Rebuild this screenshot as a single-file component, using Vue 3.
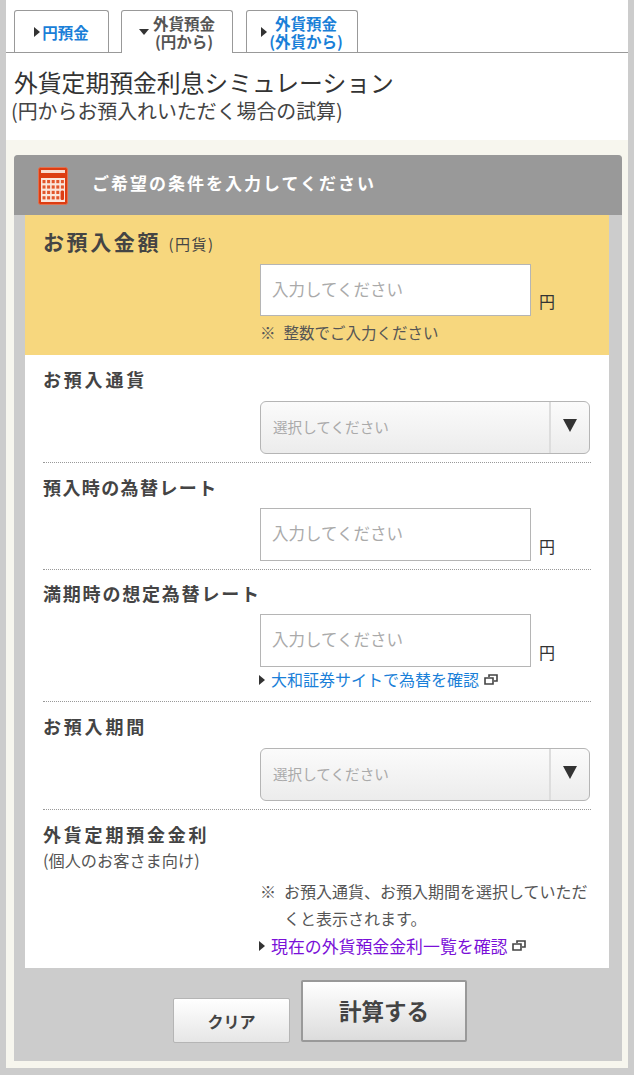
<script setup>
const tabs = [
  { lines: ['円預金'], active: false },
  { lines: ['外貨預金', '(円から)'], active: true },
  { lines: ['外貨預金', '(外貨から)'], active: false },
]
</script>

<template>
  <div class="page">
    <nav class="tabs">
      <a v-for="(tab, i) in tabs" :key="i" class="tab" :class="{ active: tab.active, first: i === 0 }" href="#">
        <span class="tabArrow"></span>
        <span class="tabText">
          <span v-for="line in tab.lines" :key="line">{{ line }}</span>
        </span>
      </a>
    </nav>

    <header class="pageTitle">
      <h1>外貨定期預金利息シミュレーション</h1>
      <p>(円からお預入れいただく場合の試算)</p>
    </header>

    <main class="cream">
      <section class="panel">
        <div class="panelHead">
          <svg class="calc" width="30" height="38" viewBox="0 0 30 38">
            <rect x="0.5" y="0.5" width="29" height="37" rx="2" fill="#dd3d12" stroke="#e2714f" />
            <rect x="3" y="3" width="24" height="3" fill="#f9dccf" />
            <rect x="3" y="11" width="24" height="24" fill="#fbe6dc" />
            <g fill="#e2562c">
              <template v-for="r in 4" :key="'r' + r">
                <rect v-for="c in 5" :key="c" :x="4.5 + (c - 1) * 4.6" :y="13 + (r - 1) * 5.4" width="3" height="3.2" />
              </template>
            </g>
            <rect x="22.6" y="23.5" width="3.4" height="9.5" rx="1.6" fill="#dd3d12" />
          </svg>
          <h2>ご希望の条件を入力してください</h2>
        </div>

        <div class="panelBody">
          <div class="amount">
            <div class="label big">お預入金額 <small>(円貨)</small></div>
            <div class="field">
              <div class="fakeInput">入力してください</div>
              <span class="unit">円</span>
            </div>
            <p class="note first">
              <span>※</span>
              <span>整数でご入力ください</span>
            </p>
          </div>

          <div class="row rowSelect">
            <div class="label wide">お預入通貨</div>
            <div class="field">
              <div class="fakeSelect">
                <span>選択してください</span>
                <i class="selectBtn"><b></b></i>
              </div>
            </div>
          </div>

          <div class="row rowInput">
            <div class="label">預入時の為替レート</div>
            <div class="field">
              <div class="fakeInput">入力してください</div>
              <span class="unit">円</span>
            </div>
          </div>

          <div class="row rowLink">
            <div class="label mid">満期時の想定為替レート</div>
            <div class="field">
              <div class="fakeInput">入力してください</div>
              <span class="unit">円</span>
            </div>
            <a class="extLink" href="#">
              <span class="linkArrow"></span>大和証券サイトで為替を確認
              <svg class="ext" width="14" height="11" viewBox="0 0 14 11">
                <path d="M5 3V1h8v6h-3M1 4h8v6H1z" fill="none" stroke="#444" stroke-width="1.6" />
              </svg>
            </a>
          </div>

          <div class="row rowSelect">
            <div class="label wide">お預入期間</div>
            <div class="field">
              <div class="fakeSelect">
                <span>選択してください</span>
                <i class="selectBtn"><b></b></i>
              </div>
            </div>
          </div>

          <div class="row last">
            <div class="label wide">外貨定期預金金利</div>
            <div class="subLabel">(個人のお客さま向け)</div>
            <p class="note rate">
              <span>※</span>
              <span>お預入通貨、お預入期間を選択していただくと表示されます。</span>
            </p>
            <a class="extLink visited" href="#">
              <span class="linkArrow"></span>現在の外貨預金金利一覧を確認
              <svg class="ext" width="14" height="11" viewBox="0 0 14 11">
                <path d="M5 3V1h8v6h-3M1 4h8v6H1z" fill="none" stroke="#444" stroke-width="1.6" />
              </svg>
            </a>
          </div>
        </div>

        <div class="buttons">
          <button class="btnClear">クリア</button>
          <button class="btnCalc">計算する</button>
        </div>
      </section>
    </main>
  </div>
</template>

<style scoped>
.page {
  width: 622px;
  margin: 0 6px;
  padding-top: 6px;
  background: #fff;
  font-family: "Noto Sans CJK JP", "Liberation Sans", sans-serif;
  color: #333;
}

/* tabs */
.tabs {
  display: flex;
  align-items: flex-end;
  height: 47px;
  padding-left: 8px;
  gap: 12px;
  border-bottom: 1px solid #999;
  box-sizing: border-box;
}
.tab {
  display: flex;
  align-items: center;
  justify-content: center;
  width: 112px;
  height: 42px;
  box-sizing: border-box;
  border: 1px solid #999;
  border-bottom: 0;
  border-radius: 3px 3px 0 0;
  background: #fff;
  color: #1a7fd8;
  text-decoration: none;
  font-size: 15.5px;
  font-weight: 700;
  line-height: 18px;
}
.tab.first { width: 95px; }
.tab:last-child { margin-left: 1px; }
.tab.active {
  height: 43px;
  margin-bottom: -1px;
  color: #555;
}
.tabText {
  display: flex;
  flex-direction: column;
  align-items: center;
}
.tabArrow {
  width: 0;
  height: 0;
  margin-right: 2px;
  border-style: solid;
  border-width: 5px 0 5px 6px;
  border-color: transparent transparent transparent #333;
}
.active .tabArrow {
  margin-right: 4px;
  border-width: 6px 5px 0 5px;
  border-color: #333 transparent transparent transparent;
}

/* title */
.pageTitle { height: 87px; padding-left: 8px; box-sizing: border-box; }
.pageTitle h1 {
  margin: 0;
  padding-top: 14px;
  font-size: 23.8px;
  line-height: 30px;
  font-weight: 400;
  color: #333;
}
.pageTitle p {
  margin: 0 0 0 -3px;
  font-size: 19.9px;
  line-height: 28px;
  color: #444;
}

.cream {
  padding: 15px 6px 7px 8px;
  background: #f7f6ee;
}
.panel {
  background: #ccc;
  border-radius: 4px 4px 0 0;
}
.panelHead {
  display: flex;
  align-items: center;
  height: 60px;
  padding-left: 24px;
  background: #999;
  border-radius: 4px 4px 0 0;
}
.calc { margin-top: 1px; }
.panelHead h2 {
  margin: 0 0 5px 24px;
  font-size: 17px;
  font-weight: 700;
  letter-spacing: 2px;
  color: #fff;
}
.panelBody {
  margin: 0 13px 0 11px;
  background: #fff;
}

/* rows */
.amount {
  height: 140px;
  box-sizing: border-box;
  padding: 13px 18px 0;
  background: #f7d77e;
}
.label {
  font-size: 18px;
  line-height: 26px;
  font-weight: 700;
  letter-spacing: 1.4px;
  color: #444;
}
.label.wide { letter-spacing: 2.8px; }
.label.mid { letter-spacing: 1.8px; }
.label.big {
  font-size: 21px;
  letter-spacing: 2.6px;
}
.label small {
  font-size: 15px;
  font-weight: 400;
  letter-spacing: 1.5px;
}
.row {
  margin: 0 18px;
  padding-top: 11px;
  border-bottom: 1px dotted #999;
}
.row .label { margin-bottom: 8px; }
.amount .label { margin-bottom: 7px; }
.rowSelect { padding-bottom: 8px; }
.rowSelect .label { margin-bottom: 9px; }
.rowInput { padding-bottom: 8px; }
.rowLink { padding-top: 10px; padding-bottom: 8px; }
.row.last { border-bottom: 0; padding-bottom: 9px; }
.row.last .label { margin-bottom: 0; }
.field {
  display: flex;
  align-items: flex-end;
  margin-left: 217px;
}
.fakeInput {
  width: 271px;
  height: 53px;
  box-sizing: border-box;
  padding-left: 11px;
  display: flex;
  align-items: center;
  padding-bottom: 3px;
  border: 1.5px solid #b5b5b5;
  background: #fff;
  font-size: 16.5px;
  color: #aaa;
}
.amount .fakeInput { height: 52px; }
.unit {
  margin: 0 0 4px 8px;
  font-size: 16px;
  line-height: 22px;
  color: #333;
}
.fakeSelect {
  display: flex;
  align-items: center;
  justify-content: space-between;
  width: 330px;
  height: 53px;
  box-sizing: border-box;
  padding-left: 12px;
  border: 1.5px solid #b5b5b5;
  border-radius: 6px;
  background: linear-gradient(#fbfbfb, #ececec);
  font-size: 14.6px;
  color: #aaa;
}
.fakeSelect span { padding-bottom: 2px; }
.selectBtn {
  display: flex;
  align-items: center;
  justify-content: center;
  width: 38px;
  height: 100%;
  border-left: 2px solid #ddd;
}
.selectBtn b {
  width: 0;
  height: 0;
  border-style: solid;
  border-width: 13px 7.5px 0 7.5px;
  border-color: #333 transparent transparent transparent;
  margin-bottom: 4px;
}
.note {
  margin: 0;
  font-size: 16px;
  line-height: 27px;
  color: #555;
}
.note.first {
  display: flex;
  gap: 8px;
  margin: 4px 0 0 217px;
  font-size: 15.5px;
  line-height: 24px;
}
.note.rate {
  display: flex;
  gap: 8px;
  margin: 5px 0 0 217px;
}
.subLabel {
  font-size: 16.2px;
  line-height: 26px;
  color: #555;
}
.extLink {
  display: flex;
  align-items: center;
  margin-left: 216px;
  font-size: 16px;
  line-height: 27px;
  color: #1a7fd8;
  text-decoration: none;
}
.rowLink .extLink { margin-top: -1px; }
.extLink.visited {
  font-size: 16.9px;
  color: #7a10d8;
}
.linkArrow {
  width: 0;
  height: 0;
  margin-right: 6px;
  border-style: solid;
  border-width: 5px 0 5px 6px;
  border-color: transparent transparent transparent #333;
}
.ext { margin-left: 5px; }

/* buttons */
.buttons {
  display: flex;
  justify-content: center;
  align-items: flex-end;
  gap: 11px;
  height: 93px;
  padding: 0 0 18px 4px;
  box-sizing: border-box;
}
.btnClear, .btnCalc {
  padding: 0;
  font-family: inherit;
  font-weight: 700;
  color: #444;
  background: linear-gradient(#fff, #e6e6e6);
}
.btnClear {
  width: 117px;
  height: 45px;
  border: 1.5px solid #b5b5b5;
  border-radius: 2px;
  font-size: 16px;
}
.btnCalc {
  width: 166px;
  height: 62px;
  margin-bottom: 1px;
  border: 2px solid #999;
  border-radius: 2px;
  font-size: 22.5px;
  padding-bottom: 2px;
  background: linear-gradient(#fff, #dcdcdc);
}
</style>

<style>
html, body { margin: 0; background: #ccc; }
</style>
